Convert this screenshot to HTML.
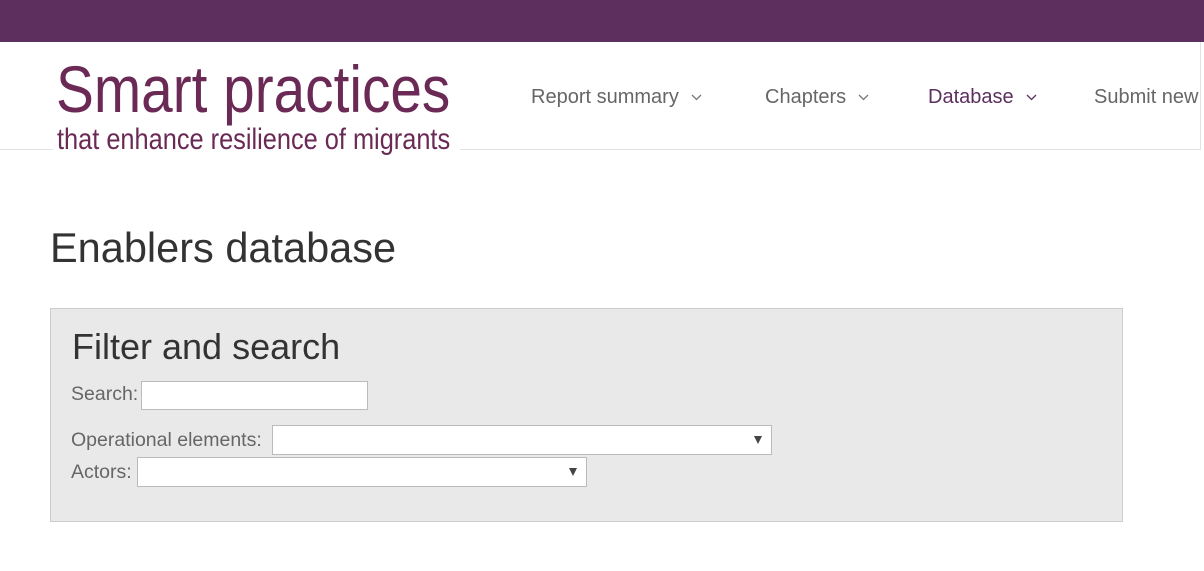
<!DOCTYPE html>
<html><head><meta charset="utf-8"><style>
body{margin:0;width:1204px;height:571px;overflow:hidden;background:#fff;font-family:"Liberation Sans",sans-serif;position:relative}
.a{position:absolute;white-space:nowrap}
.bar{left:0;top:0;width:1204px;height:42px;background:#5c2f5e}
.hdr{left:0;top:149px;width:1200px;height:1px;background:#e2e2e2}
.vr{left:1200px;top:42px;width:1px;height:108px;background:#e2e2e2}
.lw{left:53px;top:140px;width:407px;height:14px;background:#fff}
.logo{color:#6a2a55;transform-origin:0 0}
.nav{font-size:20px;color:#666;top:86px}
.nav svg{margin-left:12px;vertical-align:middle}
.box{left:50px;top:308px;width:1071px;height:212px;background:#e9e9e9;border:1px solid #ccc}
.lbl{font-size:19.5px;color:#666}
.inp{background:#fff;border:1px solid #bbb;box-sizing:border-box}
.tri{position:absolute;right:9px;top:10px;width:0;height:0;border-left:4px solid transparent;border-right:4px solid transparent;border-top:8px solid #444}
</style></head><body>
<div class="a bar"></div>
<div class="a hdr"></div>
<div class="a vr"></div>
<div class="a lw"></div>
<div class="a logo" style="left:56px;top:51px;font-size:66px;transform:scaleX(0.86)">Smart practices</div>
<div class="a logo" style="left:57px;top:123px;font-size:30px;transform:scaleX(0.845)">that enhance resilience of migrants</div>
<div class="a nav" style="left:531px">Report summary<svg width="11" height="7"><path d="M1 1l4.5 4.5L10 1" stroke="#777" stroke-width="1.3" fill="none"/></svg></div>
<div class="a nav" style="left:765px">Chapters<svg width="11" height="7"><path d="M1 1l4.5 4.5L10 1" stroke="#777" stroke-width="1.3" fill="none"/></svg></div>
<div class="a nav" style="left:928px;color:#5c2f5e">Database<svg width="11" height="7"><path d="M1 1l4.5 4.5L10 1" stroke="#5c2f5e" stroke-width="1.3" fill="none"/></svg></div>
<div class="a nav" style="left:1094px">Submit new</div>
<div class="a" style="left:50px;top:224px;font-size:41.5px;color:#333">Enablers database</div>
<div class="a box"></div>
<div class="a" style="left:72px;top:326px;font-size:36px;color:#333">Filter and search</div>
<div class="a lbl" style="left:71px;top:383px">Search:</div>
<div class="a inp" style="left:141px;top:381px;width:227px;height:29px"></div>
<div class="a lbl" style="left:71px;top:429px">Operational elements:</div>
<div class="a inp" style="left:272px;top:425px;width:500px;height:30px"><div class="tri"></div></div>
<div class="a lbl" style="left:71px;top:461px">Actors:</div>
<div class="a inp" style="left:137px;top:457px;width:450px;height:30px"><div class="tri"></div></div>
</body></html>
